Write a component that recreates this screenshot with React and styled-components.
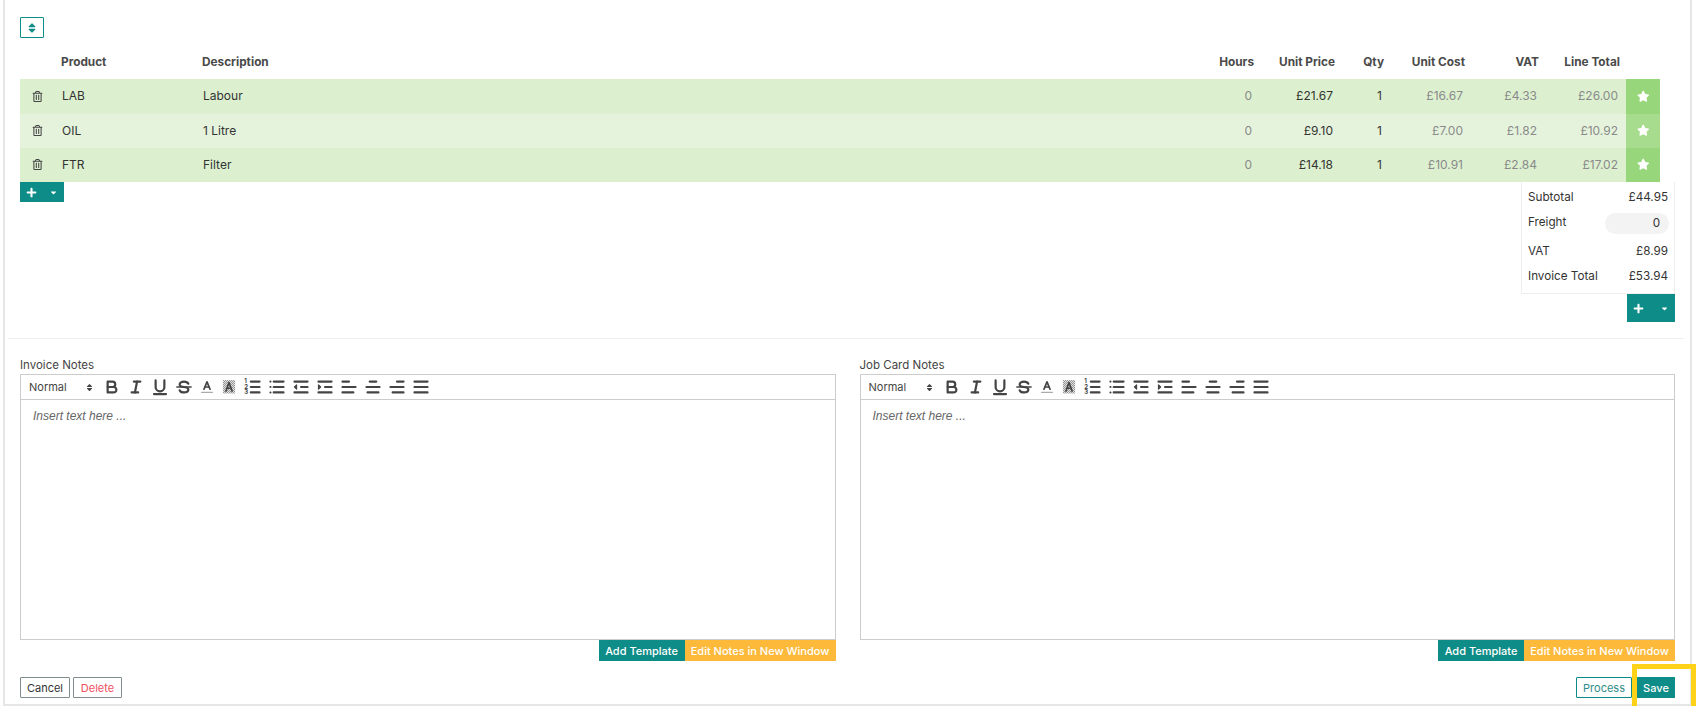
import React from 'react';
import styled, { createGlobalStyle } from 'styled-components';
import { FaCaretDown, FaPlus, FaRegTrashAlt, FaSort, FaStar } from 'react-icons/fa';

const GlobalStyle = createGlobalStyle`
  html, body { margin: 0; padding: 0; background: #fff; overflow: hidden; }
  * { box-sizing: border-box; }
  body { font-family: Inter, "Liberation Sans", sans-serif; font-size: 12px; color: #333; }
`;

const lines = [
  { code: 'LAB', desc: 'Labour', hours: 0, price: '£21.67', qty: 1, cost: '£16.67', vat: '£4.33', total: '£26.00' },
  { code: 'OIL', desc: '1 Litre', hours: 0, price: '£9.10', qty: 1, cost: '£7.00', vat: '£1.82', total: '£10.92' },
  { code: 'FTR', desc: 'Filter', hours: 0, price: '£14.18', qty: 1, cost: '£10.91', vat: '£2.84', total: '£17.02' },
];

const columns = '42px 141px 1fr 81px 81px 49px 81px 74px 81px 34px';

const Frame = styled.div`
  position: relative;
  margin-left: 3px;
  width: 1689px;
  height: 706px;
  padding: 17px 15px 0;
  border: 2px solid #e6e6e6;
  border-top: 0;
`;

const SortButton = styled.button`
  display: flex;
  align-items: center;
  justify-content: center;
  width: 24px;
  height: 21px;
  padding: 0;
  background: #fff;
  border: 1px solid #0e8c87;
  border-radius: 1px;
  color: #0e8c87;
  font-size: 12px;
`;

const Table = styled.div`
  width: 1640px;
`;

const HeadRow = styled.div`
  display: grid;
  grid-template-columns: ${columns};
  align-items: center;
  height: 41px;
  padding-top: 7px;
  font-size: 11.8px;
  font-weight: 700;
  color: #4a4a4a;
`;

const HeadCell = styled.div`
  text-align: ${(p) => (p.$left ? 'left' : 'right')};
  padding-right: ${(p) => (p.$left ? '0' : '6px')};
  margin-left: ${(p) => (p.$left ? '-1px' : '0')};
`;

const Row = styled.div`
  display: grid;
  grid-template-columns: ${columns};
  align-items: center;
  height: ${(p) => p.$h}px;
  background: ${(p) => (p.$alt ? '#e5f3dc' : '#dcf0d0')};
`;

const TrashCell = styled.div`
  display: flex;
  justify-content: center;
  width: 34px;
  margin-bottom: 1px;
  color: #444;
  font-size: 11px;
`;

const TextCell = styled.div`
  margin-bottom: 2px;
  color: #333;
`;

const NumCell = styled.div`
  margin-bottom: 2px;
  text-align: right;
  padding-right: 8px;
  color: ${(p) => (p.$muted ? '#8a8a8a' : '#333')};
`;

const StarCell = styled.div`
  display: flex;
  align-items: center;
  justify-content: center;
  height: 100%;
  padding-bottom: 1px;
  color: #fff;
  font-size: 12.5px;
  background: ${(p) => (p.$alt ? '#a7dc8e' : '#97d67a')};
`;

const UnderTable = styled.div`
  display: flex;
  justify-content: space-between;
  align-items: flex-start;
`;

const AddSplit = styled.div`
  display: flex;
  align-items: center;
  justify-content: space-between;
  width: ${(p) => p.$w}px;
  height: ${(p) => p.$h}px;
  padding: 0 6px;
  background: #0e8c87;
  color: #fff;
  font-size: 11px;
  svg:last-child { font-size: 9px; }
`;

const TotalsColumn = styled.div`
  display: flex;
  flex-direction: column;
  align-items: flex-end;
`;

const Totals = styled.div`
  width: 154px;
  height: 112px;
  padding: 2px 6px 0 6px;
  border: 1px solid #eee;
  border-top: 0;
  font-size: 11.7px;
`;

const TotalRow = styled.div`
  display: flex;
  align-items: center;
  justify-content: space-between;
  height: ${(p) => p.$h}px;
`;

const FreightLabel = styled.span`
  margin-top: -4px;
`;

const FreightInput = styled.div`
  width: 64px;
  height: 21px;
  margin-right: -1px;
  padding: 3px 9px 0 0;
  border-radius: 11px;
  background: #f3f3f3;
  text-align: right;
`;

const Divider = styled.hr`
  height: 1px;
  margin: 16px -9px 0 -12px;
  border: 0;
  background: #eee;
`;

const NotesGrid = styled.div`
  display: grid;
  grid-template-columns: 1fr 1fr;
  gap: 24px;
  margin-top: 19px;
`;

const NotesLabel = styled.div`
  height: 16px;
  font-size: 11.5px;
  color: #444;
`;

const Editor = styled.div`
  height: 266px;
  border: 1px solid #ccc;
`;

const Toolbar = styled.div`
  display: flex;
  align-items: center;
  height: 25px;
  padding-left: 8px;
  border-bottom: 1px solid #ccc;
`;

const Picker = styled.div`
  display: flex;
  align-items: center;
  justify-content: space-between;
  width: 71px;
  padding-right: 6px;
  font-size: 11px;
  color: #444;
  svg { font-size: 9px; }
`;

const ToolIcon = styled.svg`
  flex: none;
  width: ${(p) => (p.$small ? 22 : 24)}px;
  height: 20px;
  margin-left: ${(p) => (p.$nudge ? 1 : 0)}px;
  fill: none;
  stroke: #444;
  stroke-width: 2;
  stroke-linecap: round;
  stroke-linejoin: round;
`;

const EditorBody = styled.div`
  padding: 9px 12px;
  font-family: "Liberation Sans", sans-serif;
  font-size: 12px;
  font-style: italic;
  color: #666;
`;

const NotesActions = styled.div`
  display: flex;
  justify-content: flex-end;
`;

const ActionButton = styled.div`
  display: flex;
  align-items: center;
  justify-content: center;
  width: ${(p) => p.$w}px;
  height: 21px;
  color: #fff;
  font-weight: 500;
  font-size: 11px;
  background: ${(p) => p.$bg};
`;

const Footer = styled.div`
  display: flex;
  justify-content: space-between;
  margin-top: 16px;
`;

const ButtonGroup = styled.div`
  display: flex;
  gap: ${(p) => p.$gap}px;
`;

const OutlineButton = styled.div`
  display: flex;
  align-items: center;
  justify-content: center;
  width: ${(p) => p.$w}px;
  height: 21px;
  border: 1px solid ${(p) => p.$border};
  border-radius: 1px;
  font-size: 11px;
  color: ${(p) => p.$color};
`;

const Highlight = styled.div`
  position: absolute;
  left: 1627px;
  top: 664px;
  width: 64px;
  height: 47px;
  border: 5px solid #ffd21a;
  pointer-events: none;
`;

const Icon = ({ small, nudge, children }) => (
  <ToolIcon
    viewBox={small ? '0 0 18 16.360' : '-2 -.170 22 18.330'}
    $small={small}
    $nudge={nudge}
    preserveAspectRatio="xMidYMid meet"
  >
    {children}
  </ToolIcon>
);

const Lines = ({ rows }) => rows.map(([a, b, y]) => <line key={y} x1={a} x2={b} y1={y} y2={y} />);

const EditorToolbar = ({ id }) => (
  <Toolbar>
    <Picker>Normal<FaSort /></Picker>
    <Icon>
      <path d="M5,4H9.500A2.500,2.500,0,0,1,12,6.500v0A2.500,2.500,0,0,1,9.500,9H5V4Z" />
      <path d="M5,9h5.500A2.500,2.500,0,0,1,13,11.500v0A2.500,2.500,0,0,1,10.500,14H5V9Z" />
    </Icon>
    <Icon>
      <Lines rows={[[7, 13, 4], [5, 11, 14]]} />
      <line x1="8" x2="10" y1="14" y2="4" />
    </Icon>
    <Icon>
      <path d="M5,3V9a4,4,0,0,0,4,4H9a4,4,0,0,0,4-4V3" />
      <rect x="3" y="15" width="12" height="1" rx=".5" fill="#444" strokeWidth="1" />
    </Icon>
    <Icon>
      <line x1="2.500" x2="15.500" y1="9" y2="9" strokeWidth="1.500" />
      <path d="M13 6C12.400 4.700 10.800 4 9 4 6.900 4 5 5 5 6.700 5 8 6 8.700 9 9c3 .4 4 1.100 4 2.400C13 13 11.200 14 9 14c-1.900 0-3.500-.8-4-2" />
    </Icon>
    <Icon small>
      <polyline points="6.500 10 9 4 11.500 10" strokeWidth="1.400" />
      <line x1="7.500" x2="10.500" y1="8.200" y2="8.200" strokeWidth="1.200" />
      <line x1="4.500" x2="13.500" y1="12.500" y2="12.500" strokeWidth="1" stroke="#aaa" />
    </Icon>
    <Icon small>
      <defs>
        <pattern id={id} width="1.640" height="1.640" patternUnits="userSpaceOnUse">
          <rect width=".82" height=".82" fill="#777" stroke="none" />
          <rect x=".82" y=".82" width=".82" height=".82" fill="#777" stroke="none" />
        </pattern>
      </defs>
      <rect x="4" y="2.500" width="10" height="11" fill={`url(#${id})`} stroke="none" />
      <polyline points="6.500 11.500 9 4.500 11.500 11.500" strokeWidth="1.400" />
      <line x1="7.500" x2="10.500" y1="9.200" y2="9.200" strokeWidth="1.200" />
    </Icon>
    <Icon nudge>
      <Lines rows={[[7, 15, 4], [7, 15, 9], [7, 15, 14]]} />
      <text x="1" y="5.500" fontSize="5.500" fontWeight="700" fill="#444" stroke="none">1</text>
      <text x="1" y="10.500" fontSize="5.500" fontWeight="700" fill="#444" stroke="none">2</text>
      <text x="1" y="15.500" fontSize="5.500" fontWeight="700" fill="#444" stroke="none">3</text>
    </Icon>
    <Icon>
      <Lines rows={[[6, 15, 4], [6, 15, 9], [6, 15, 14], [3, 3, 4.010], [3, 3, 9.010], [3, 3, 14.010]]} />
    </Icon>
    <Icon>
      <Lines rows={[[3, 15, 14], [3, 15, 4], [9, 15, 9]]} />
      <polygon points="5 7 5 11 3 9" fill="#444" strokeWidth="1" />
    </Icon>
    <Icon>
      <Lines rows={[[3, 15, 14], [3, 15, 4], [9, 15, 9]]} />
      <polygon points="3 7 3 11 5 9" fill="#444" strokeWidth="1" />
    </Icon>
    <Icon><Lines rows={[[3, 9, 4], [3, 15, 9], [3, 13, 14]]} /></Icon>
    <Icon><Lines rows={[[6, 12, 4], [3, 15, 9], [4, 14, 14]]} /></Icon>
    <Icon><Lines rows={[[9, 15, 4], [3, 15, 9], [5, 15, 14]]} /></Icon>
    <Icon><Lines rows={[[3, 15, 4], [3, 15, 9], [3, 15, 14]]} /></Icon>
  </Toolbar>
);

const NotesPanel = ({ title, id }) => (
  <div>
    <NotesLabel>{title}</NotesLabel>
    <Editor>
      <EditorToolbar id={id} />
      <EditorBody>Insert text here ...</EditorBody>
    </Editor>
    <NotesActions>
      <ActionButton $w={86} $bg="#0e8c87">Add Template</ActionButton>
      <ActionButton $w={151} $bg="#fdb93a">Edit Notes in New Window</ActionButton>
    </NotesActions>
  </div>
);

const App = () => {
  return (
    <>
      <GlobalStyle />
      <Frame>
        <SortButton><FaSort /></SortButton>
        <Table>
          <HeadRow>
            <div />
            <HeadCell $left>Product</HeadCell>
            <HeadCell $left>Description</HeadCell>
            <HeadCell>Hours</HeadCell>
            <HeadCell>Unit Price</HeadCell>
            <HeadCell>Qty</HeadCell>
            <HeadCell>Unit Cost</HeadCell>
            <HeadCell>VAT</HeadCell>
            <HeadCell>Line Total</HeadCell>
            <div />
          </HeadRow>
          {lines.map((line, i) => (
            <Row key={line.code} $alt={i === 1} $h={i === 0 ? 35 : 34}>
              <TrashCell><FaRegTrashAlt /></TrashCell>
              <TextCell>{line.code}</TextCell>
              <TextCell>{line.desc}</TextCell>
              <NumCell $muted>{line.hours}</NumCell>
              <NumCell>{line.price}</NumCell>
              <NumCell>{line.qty}</NumCell>
              <NumCell $muted>{line.cost}</NumCell>
              <NumCell $muted>{line.vat}</NumCell>
              <NumCell $muted>{line.total}</NumCell>
              <StarCell $alt={i === 1}><FaStar /></StarCell>
            </Row>
          ))}
        </Table>
        <UnderTable>
          <AddSplit $w={44} $h={20}><FaPlus /><FaCaretDown /></AddSplit>
          <TotalsColumn>
            <Totals>
              <TotalRow $h={25}><span>Subtotal</span><span>£44.95</span></TotalRow>
              <TotalRow $h={29}><FreightLabel>Freight</FreightLabel><FreightInput>0</FreightInput></TotalRow>
              <TotalRow $h={25}><span>VAT</span><span>£8.99</span></TotalRow>
              <TotalRow $h={25}><span>Invoice Total</span><span>£53.94</span></TotalRow>
            </Totals>
            <AddSplit $w={48} $h={28}><FaPlus /><FaCaretDown /></AddSplit>
          </TotalsColumn>
        </UnderTable>
        <Divider />
        <NotesGrid>
          <NotesPanel title="Invoice Notes" id="dots-invoice" />
          <NotesPanel title="Job Card Notes" id="dots-job" />
        </NotesGrid>
        <Footer>
          <ButtonGroup $gap={3}>
            <OutlineButton $w={50} $border="#7f8c8d" $color="#333">Cancel</OutlineButton>
            <OutlineButton $w={49} $border="#7f8c8d" $color="#f0505f">Delete</OutlineButton>
          </ButtonGroup>
          <ButtonGroup $gap={5}>
            <OutlineButton $w={56} $border="#0e8c87" $color="#2f8c88">Process</OutlineButton>
            <ActionButton $w={38} $bg="#0e8c87">Save</ActionButton>
          </ButtonGroup>
        </Footer>
        <Highlight />
      </Frame>
    </>
  );
};

export default App;
